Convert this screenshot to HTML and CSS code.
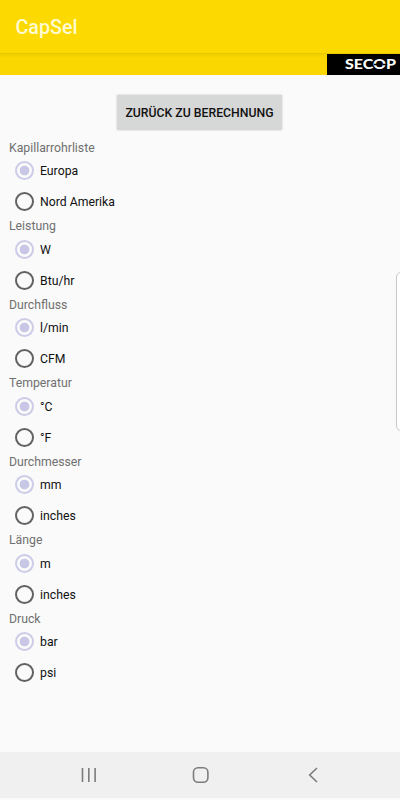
FILE: index.html
```html
<!DOCTYPE html>
<html lang="de">
<head>
<meta charset="utf-8">
<title>CapSel</title>
<link rel="stylesheet" href="styles.css">
</head>
<body>
<div class="screen">
  <header class="appbar"><h1>CapSel</h1></header>
  <div class="brandbar">
    <div class="logo">
      <svg width="73" height="21" viewBox="0 0 73 21">
        <text class="wordmark" x="18" y="15" textLength="51" lengthAdjust="spacingAndGlyphs">SECOP</text>
        <path d="M47 10.5h4.2M56 10.5h4.2" stroke="#000" stroke-width="1.6"/>
      </svg>
    </div>
  </div>
  <main class="content">
    <button class="back" type="button">ZURÜCK ZU BERECHNUNG</button>
    <form class="settings">
      <section><h2>Kapillarrohrliste</h2>
        <label><input type="radio" name="list" checked><span>Europa</span></label>
        <label><input type="radio" name="list"><span>Nord Amerika</span></label></section>
      <section><h2>Leistung</h2>
        <label><input type="radio" name="power" checked><span>W</span></label>
        <label><input type="radio" name="power"><span>Btu/hr</span></label></section>
      <section><h2>Durchfluss</h2>
        <label><input type="radio" name="flow" checked><span>l/min</span></label>
        <label><input type="radio" name="flow"><span>CFM</span></label></section>
      <section><h2>Temperatur</h2>
        <label><input type="radio" name="temp" checked><span>°C</span></label>
        <label><input type="radio" name="temp"><span>°F</span></label></section>
      <section><h2>Durchmesser</h2>
        <label><input type="radio" name="diameter" checked><span>mm</span></label>
        <label><input type="radio" name="diameter"><span>inches</span></label></section>
      <section><h2>Länge</h2>
        <label><input type="radio" name="length" checked><span>m</span></label>
        <label><input type="radio" name="length"><span>inches</span></label></section>
      <section><h2>Druck</h2>
        <label><input type="radio" name="pressure" checked><span>bar</span></label>
        <label><input type="radio" name="pressure"><span>psi</span></label></section>
    </form>
  </main>
  <nav class="navbar">
    <svg viewBox="0 0 24 24"><path d="M5.5 5v14M11.8 5v14M18.1 5v14"/></svg>
    <svg viewBox="0 0 24 24"><rect x="4.5" y="4.8" width="14.4" height="14.4" rx="4.5"/></svg>
    <svg viewBox="0 0 24 24"><path d="M16 5l-7.3 7 7.3 7"/></svg>
  </nav>
  <div class="edge-panel"></div>
</div>
</body>
</html>
```
FILE: styles.css
```css
* { box-sizing: border-box; }
body { margin: 0; font-family: Roboto, sans-serif; background: #fafafa; }
.screen {
  position: relative;
  display: flex;
  flex-direction: column;
  width: 400px;
  height: 800px;
  padding-bottom: 2px;
  overflow: hidden;
}
.appbar {
  display: flex;
  align-items: center;
  flex: 0 0 54px;
  padding-left: 15.5px;
  background: #fcd900;
  border-bottom: 1px solid #e9c800;
}
.appbar h1 { margin: 2px 0 0; font-size: 19.7px; font-weight: 500; line-height: 24px; color: #fffbd0; }
.brandbar {
  display: flex;
  justify-content: flex-end;
  flex: 0 0 21px;
  background: linear-gradient(#f0cf00, #fad700 4px);
}
.logo { width: 73px; height: 21px; background: #000; }
.logo svg { display: block; }
.wordmark { font: 900 12.5px Lato, sans-serif; fill: #fff; }
.content { display: flex; flex-direction: column; flex: 1; min-height: 0; padding-top: 20px; }
.back {
  align-self: center;
  width: 165px;
  height: 35px;
  margin-right: 1px;
  padding: 1px 0 0;
  border: 0;
  border-radius: 1px;
  background: #d6d7d7;
  box-shadow: 0 0 2px #bbb;
  font: 500 12.25px Roboto, sans-serif;
  color: #111;
  white-space: nowrap;
}
.settings { padding: 9px 9px 0; }
.settings section { height: 78.5px; }
.settings h2 { margin: 0; height: 16px; padding-top: 0.5px; font-size: 12.25px; font-weight: 400; line-height: 16px; color: #707070; }
.settings label { display: flex; align-items: center; height: 31.25px; padding-left: 6px; gap: 6px; font-size: 12.25px; color: #111; }
.settings span { padding-top: 1px; }
.settings input {
  appearance: none;
  flex: none;
  width: 19px;
  height: 19px;
  margin: 0;
  border: 2px solid #626262;
  border-radius: 50%;
}
.settings input:checked {
  border-color: #cccce8;
  background: radial-gradient(circle, #c8c8e6 4.5px, transparent 5.2px);
}
.navbar {
  display: flex;
  align-items: center;
  justify-content: space-between;
  flex: 0 0 46px;
  padding: 0 75px 0 77px;
  background: #f0f0f0;
}
.navbar svg { width: 24px; height: 24px; fill: none; stroke: #7c7c7c; stroke-width: 1.6; }
.edge-panel {
  position: absolute;
  top: 272px;
  right: -8px;
  width: 12px;
  height: 159px;
  border: 1px solid #c8c8c8;
  border-radius: 5px;
  background: #fff;
}
```
